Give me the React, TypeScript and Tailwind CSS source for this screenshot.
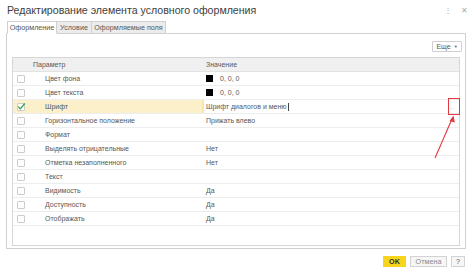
import React from 'react';

type Row = {
  name: string;
  value?: string;
  swatch?: boolean;
  checked?: boolean;
  editing?: boolean;
};

const rows: Row[] = [
  { name: 'Цвет фона', value: '0, 0, 0', swatch: true },
  { name: 'Цвет текста', value: '0, 0, 0', swatch: true },
  { name: 'Шрифт', value: 'Шрифт диалогов и меню', checked: true, editing: true },
  { name: 'Горизонтальное положение', value: 'Прижать влево' },
  { name: 'Формат' },
  { name: 'Выделять отрицательные', value: 'Нет' },
  { name: 'Отметка незаполненного', value: 'Нет' },
  { name: 'Текст' },
  { name: 'Видимость', value: 'Да' },
  { name: 'Доступность', value: 'Да' },
  { name: 'Отображать', value: 'Да' },
];

function Checkbox({ checked }: { checked?: boolean }) {
  return (
    <div className="w-[8px] h-[8px] border border-[#cccccc] rounded-[1px] bg-white relative">
      {checked && (
        <svg className="absolute left-[-1px] top-[-2px]" width="9" height="9" viewBox="0 0 9 9">
          <path d="M1.2 4.6 L3.3 6.8 L7.8 1.5" fill="none" stroke="#2f9e44" strokeWidth="1.2" />
        </svg>
      )}
    </div>
  );
}

export default function App() {
  return (
    <div className="w-[474px] h-[274px] bg-white relative overflow-hidden font-['Liberation_Sans',Arial,sans-serif] text-[#585858]">
      {/* Title bar */}
      <div className="h-[21px] flex items-center justify-between pl-[7px] pr-[6px]">
        <div className="text-[10.6px] text-[#404040] leading-none">Редактирование элемента условного оформления</div>
        <div className="flex items-center gap-[9px] text-[#aaa]">
          <span className="text-[8px] leading-none">⋮</span>
          <span className="text-[8px] leading-none">✕</span>
        </div>
      </div>

      {/* Tabs */}
      <div className="flex ml-[7px] h-[12px] relative z-10 text-[7.2px] leading-none">
        <div className="w-[50px] h-[13px] border border-[#d0d0d0] border-b-white bg-white flex items-center justify-center">Оформление</div>
        <div className="w-[35px] h-[12px] border-t border-r border-[#d0d0d0] bg-[#ececec] flex items-center justify-center">Условие</div>
        <div className="w-[74px] h-[12px] border-t border-r border-[#d0d0d0] bg-[#ececec] flex items-center justify-center">Оформляемые поля</div>
      </div>

      {/* Tab panel */}
      <div className="ml-[6px] w-[460px] h-[216px] border border-[#d0d0d0] flex flex-col px-[5px]">
        <div className="flex justify-end pt-[7px]">
          <div className="w-[30px] h-[11px] border border-[#cfcfcf] rounded-[1px] bg-white flex items-center justify-center gap-[3px] text-[7px] leading-none mr-[-2px]">
            <span>Еще</span>
            <span className="text-[4px]">▼</span>
          </div>
        </div>

        <div className="mt-[5px] w-[448px] h-[189px] border border-[#d6d6d6] flex flex-col text-[7px] leading-none">
          <div className="h-[14px] bg-[#f0f0f0] flex items-center border-b border-[#e2e2e2] shrink-0">
            <div className="w-[189px] pl-[20px]">Параметр</div>
            <div className="pl-[4px]">Значение</div>
          </div>
          {rows.map((r) => (
            <div key={r.name} className="h-[14px] flex items-stretch border-b border-[#ededed] shrink-0">
              <div className={`w-[189px] flex items-center ${r.checked ? 'bg-[#fcf0cb]' : ''}`}>
                <div className="w-[32px] pl-[4px] flex items-center">
                  <Checkbox checked={r.checked} />
                </div>
                <span>{r.name}</span>
              </div>
              <div className={`flex-1 flex items-center ${r.editing ? 'border-l-[2px] border-[#f6e6b0] pl-[2px]' : 'pl-[4px]'}`}>
                {r.swatch && <div className="w-[7px] h-[7px] bg-black mr-[7px]" />}
                {r.value && <span>{r.value}</span>}
                {r.editing && <span className="w-px h-[8px] bg-[#444] ml-px" />}
                {r.editing && <span className="ml-auto mr-[5px] text-[7px] text-[#8cbde8]">…</span>}
              </div>
            </div>
          ))}
        </div>
      </div>

      {/* Buttons */}
      <div className="flex justify-end gap-[4px] pr-[9px] mt-[7px] text-[7.2px] leading-none">
        <div className="w-[23px] h-[11px] bg-[#f7d51d] flex items-center justify-center font-bold text-[#333]">OK</div>
        <div className="w-[37px] h-[11px] bg-[#f6f6f6] border border-[#d3d3d3] flex items-center justify-center text-[#888]">Отмена</div>
        <div className="w-[14px] h-[11px] bg-[#f6f6f6] border border-[#d3d3d3] flex items-center justify-center text-[#555]">?</div>
      </div>

      {/* Annotation */}
      <svg className="absolute left-0 top-0 pointer-events-none" width="474" height="274">
        <rect x="448.5" y="98.5" width="11" height="16" fill="none" stroke="#e03a3e" strokeWidth="1" />
        <line x1="435" y1="158" x2="452" y2="119" stroke="#e03a3e" strokeWidth="1.1" />
        <path d="M453.5 115.5 L449.5 121 L454.8 122.5 Z" fill="#e03a3e" />
      </svg>
    </div>
  );
}
